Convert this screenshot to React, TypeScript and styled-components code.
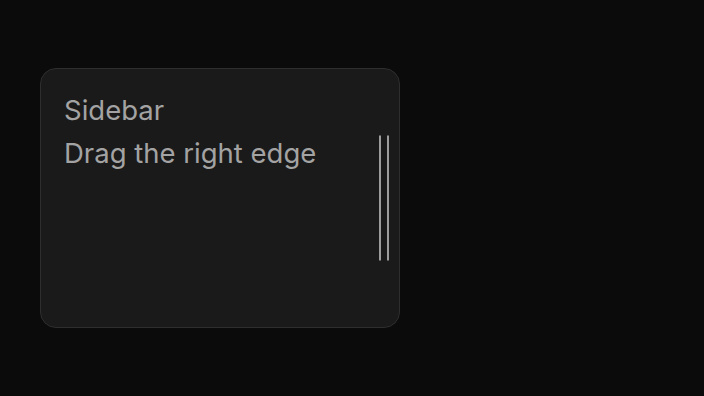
import React from "react";
import styled, { createGlobalStyle } from "styled-components";

const GlobalStyle = createGlobalStyle`
  html, body {
    margin: 0;
    padding: 0;
    background: #0b0b0b;
  }
  body {
    font-family: Inter, "Liberation Sans", sans-serif;
  }
`;

const Page = styled.div`
  width: 704px;
  height: 396px;
  padding: 68px 0 0 40px;
  box-sizing: border-box;
`;

const Panel = styled.div`
  position: relative;
  width: 360px;
  height: 260px;
  box-sizing: border-box;
  background: #1a1a1a;
  border: 1px solid #2e2e2e;
  border-radius: 16px;
  padding: 24px 23px;
  display: flex;
  flex-direction: column;
  gap: 9px;
`;

const Title = styled.div`
  font-size: 27.5px;
  line-height: 34px;
  color: #a3a3a3;
`;

const Hint = styled.div`
  font-size: 27.5px;
  line-height: 34px;
  color: #a3a3a3;
`;

const Handle = styled.div`
  position: absolute;
  right: 10px;
  top: 50%;
  transform: translateY(-50%);
  height: 125px;
  display: flex;
  gap: 6px;
`;

const Grip = styled.span`
  width: 2px;
  height: 100%;
  background: #9c9c9c;
`;

export default function App() {
  return (
    <>
      <GlobalStyle />
      <Page>
        <Panel>
          <Title>Sidebar</Title>
          <Hint>Drag the right edge</Hint>
          <Handle>
            <Grip />
            <Grip />
          </Handle>
        </Panel>
      </Page>
    </>
  );
}
